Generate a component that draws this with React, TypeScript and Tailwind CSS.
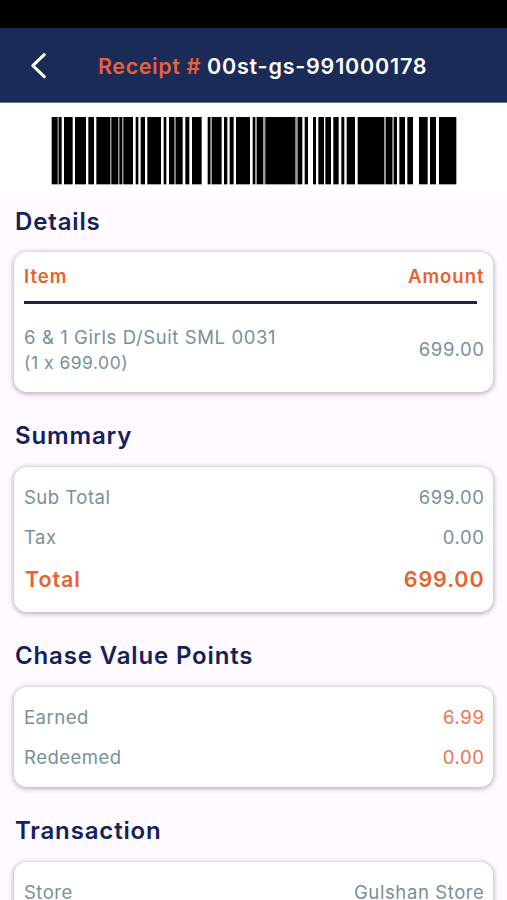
import type { ReactNode } from 'react';

// [start, end] of every black bar, on a 1218 unit wide strip
const bars = [
  [2, 20], [23, 32], [39, 65], [72, 105], [112, 129], [136, 177], [181, 201], [205, 213], [217, 246],
  [254, 262], [269, 282], [289, 330], [338, 346], [354, 370], [374, 395], [403, 415], [423, 452],
  [470, 478], [483, 512], [519, 529], [536, 548], [555, 597], [605, 612], [618, 636], [643, 733],
  [740, 754], [761, 771], [786, 795], [802, 819], [823, 840], [847, 863], [871, 880], [887, 912],
  [920, 999], [1005, 1024], [1029, 1038], [1045, 1062], [1069, 1086], [1104, 1130], [1137, 1155], [1164, 1216],
];

// the thin gaps that print grey instead of white
const greyGaps = [
  [20, 23], [177, 181], [201, 205], [213, 217], [370, 374], [478, 483], [612, 618], [636, 643], [733, 740],
  [999, 1005], [1024, 1029],
];

function Barcode() {
  return (
    <svg className="w-[406px] h-[68px]" viewBox="0 0 1218 204" preserveAspectRatio="none">
      {greyGaps.map(([start, end]) => (
        <rect key={start} x={start} y="0" width={end - start} height="202" fill="#999999" />
      ))}
      {bars.map(([start, end]) => (
        <rect key={start} x={start} y="0" width={end - start} height="202" fill="#000000" />
      ))}
    </svg>
  );
}

function Title({ children }: { children: ReactNode }) {
  return <h2 className="h-[30px] px-[15px] text-[24px] leading-[30px] font-semibold tracking-[0.85px] text-[#15215a]">{children}</h2>;
}

function Card({ className, children }: { className: string; children: ReactNode }) {
  return (
    <div className={`mx-[14px] rounded-[13px] bg-white pl-[10px] pr-[8.5px] shadow-[0_1px_5px_1px_rgba(0,0,0,0.28)] ${className}`}>
      {children}
    </div>
  );
}

function Row({ label, value, valueClass = '' }: { label: string; value: string; valueClass?: string }) {
  return (
    <div className="flex h-[40px] items-center justify-between">
      <span className="tracking-[0.5px]">{label}</span>
      <span className={valueClass}>{value}</span>
    </div>
  );
}

export default function App() {
  return (
    <div className="h-[900px] w-[507px] overflow-hidden bg-[#fefaff] font-['Inter',sans-serif] text-[18.5px] tracking-[0.6px] text-[#78909c]">
      <div className="h-[28px] bg-black" />
      <header className="flex h-[75px] items-center border-b border-[#66738f] bg-[#1a2b57]">
        <button className="ml-[30px] w-[18px]" aria-label="Back">
          <svg className="h-[28px] w-[18px]" viewBox="0 0 18 28" fill="none" stroke="#ffffff" strokeWidth="3" strokeLinecap="round" strokeLinejoin="round">
            <path d="M14.3 3.7 2.8 14.6l11.5 11" />
          </svg>
        </button>
        <h1 className="ml-[50px] pt-[2px] text-[21.5px] font-semibold tracking-[0.8px] whitespace-nowrap text-white">
          <span className="tracking-[0.6px] text-[#e5623a]">Receipt # </span>00st-gs-991000178
        </h1>
      </header>
      <div className="flex h-[92px] justify-center bg-white pt-[14px]">
        <Barcode />
      </div>

      <main className="pt-[12px]">
        <Title>Details</Title>
        <Card className="mt-[15px] h-[140px] pt-[12px]">
          <div className="flex h-[26px] items-center justify-between font-semibold tracking-[1px] text-[#e8622f]">
            <span>Item</span>
            <span>Amount</span>
          </div>
          <div className="mt-[11px] mr-[7.5px] h-[3px] bg-[#1a2355]" />
          <div className="mt-[20px] flex items-center justify-between">
            <div className="leading-[26px]">
              <p>6 &amp; 1 Girls D/Suit SML 0031</p>
              <p className="text-[17.5px] tracking-[0.5px]">(1 x 699.00)</p>
            </div>
            <span>699.00</span>
          </div>
        </Card>

        <div className="h-[29px]" />
        <Title>Summary</Title>
        <Card className="mt-[16px] h-[145px] pt-[11px]">
          <Row label="Sub Total" value="699.00" />
          <Row label="Tax" value="0.00" />
          <div className="flex h-[43px] items-center justify-between text-[21.5px] font-semibold tracking-[0.9px] text-[#e8622f]">
            <span className="pl-px">Total</span>
            <span>699.00</span>
          </div>
        </Card>

        <div className="h-[29px]" />
        <Title>Chase Value Points</Title>
        <Card className="mt-[16px] h-[100px] pt-[11px]">
          <Row label="Earned" value="6.99" valueClass="text-[#f07350]" />
          <Row label="Redeemed" value="0.00" valueClass="text-[#f07350]" />
        </Card>

        <div className="h-[29px]" />
        <Title>Transaction</Title>
        <Card className="mt-[16px] h-[145px] pt-[11px]">
          <Row label="Store" value="Gulshan Store" />
        </Card>
      </main>
    </div>
  );
}
